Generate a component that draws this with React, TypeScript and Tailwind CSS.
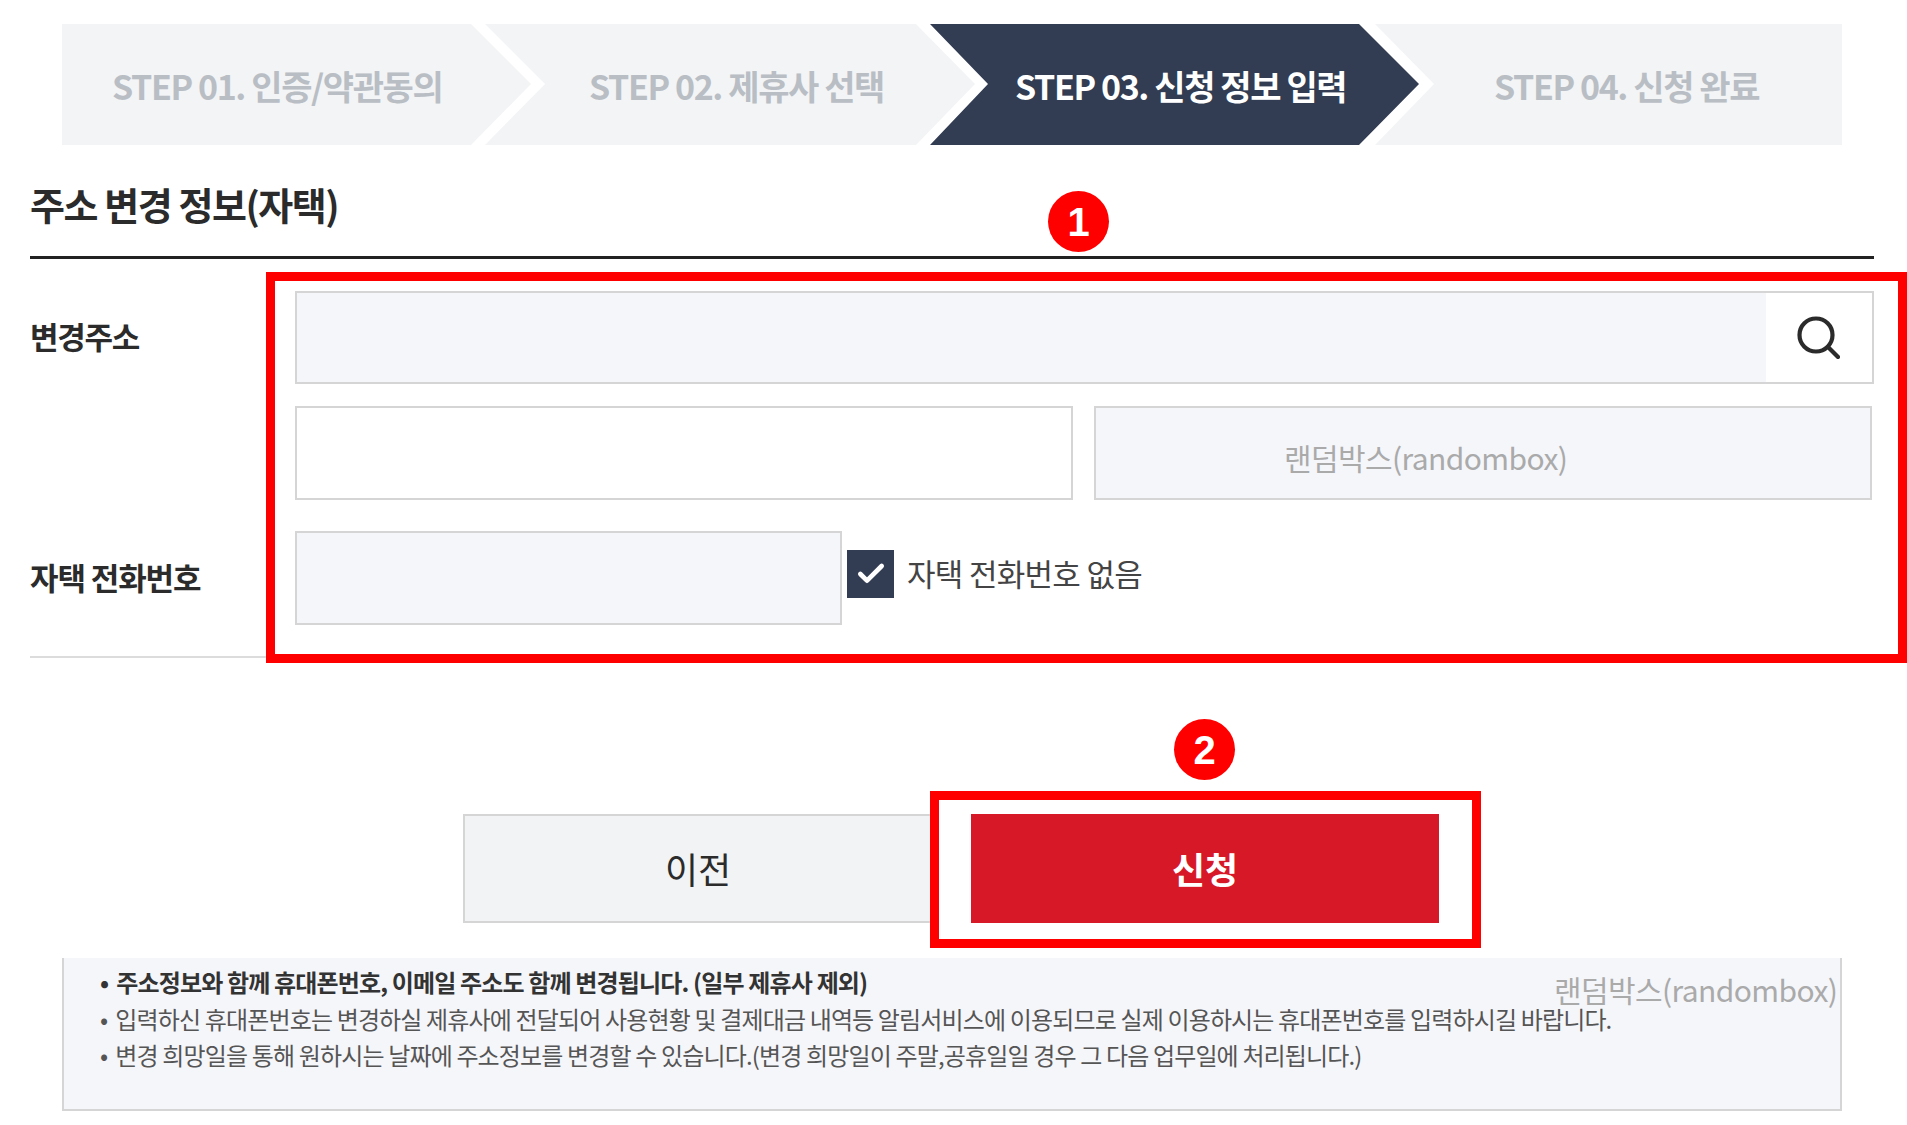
import React from "react";
import { Check } from "lucide-react";

const font = "font-['Noto_Sans_CJK_KR','Noto_Sans',sans-serif]";

const notices = [
  { text: "주소정보와 함께 휴대폰번호, 이메일 주소도 함께 변경됩니다. (일부 제휴사 제외)", strong: true },
  { text: "입력하신 휴대폰번호는 변경하실 제휴사에 전달되어 사용현황 및 결제대금 내역등 알림서비스에 이용되므로 실제 이용하시는 휴대폰번호를 입력하시길 바랍니다.", strong: false },
  { text: "변경 희망일을 통해 원하시는 날짜에 주소정보를 변경할 수 있습니다.(변경 희망일이 주말,공휴일일 경우 그 다음 업무일에 처리됩니다.)", strong: false },
];

const SearchIcon = () => (
  <svg width="44" height="44" viewBox="0 0 44 44" fill="none" stroke="#2b2b2b" strokeWidth="4.2" strokeLinecap="round">
    <circle cx="20" cy="20" r="16.5" />
    <line x1="32" y1="32" x2="42" y2="42" />
  </svg>
);

const Badge = ({ n, className }: { n: string; className: string }) => (
  <div className={`absolute flex h-[61px] w-[61px] items-center justify-center rounded-full bg-[#ff0000] font-['Liberation_Sans',sans-serif] text-[40px] font-bold leading-none text-white ${className}`}>
    {n}
  </div>
);

export default function App() {
  return (
    <div className={`${font} relative h-[1125px] w-full overflow-hidden bg-white px-[30px] pt-[24px]`}>
      {/* steps */}
      <div className="ml-[32px] flex h-[121px] text-[34px] font-bold tracking-[-1.4px]">
        <div className="flex h-full w-[469px] items-center bg-[#f3f4f6] pl-[50px] pt-[2px] text-[#b9bec5] [clip-path:polygon(0_0,409px_0,469px_60px,409px_121px,0_121px)]">
          STEP 01. 인증/약관동의
        </div>
        <div className="ml-[-46px] flex h-full w-[490px] items-center bg-[#f3f4f6] pl-[104px] pt-[2px] text-[#b9bec5] [clip-path:polygon(0_0,431px_0,490px_60px,431px_121px,0_121px,60px_60px)]">
          STEP 02. 제휴사 선택
        </div>
        <div className="ml-[-45px] flex h-full w-[489px] items-center bg-[#323c52] pl-[85px] pt-[2px] text-white [clip-path:polygon(0_0,429px_0,489px_60px,429px_121px,0_121px,58px_60px)]">
          STEP 03. 신청 정보 입력
        </div>
        <div className="ml-[-44px] flex h-full w-[467px] items-center bg-[#f3f4f6] pl-[119px] pt-[2px] text-[#b9bec5] [clip-path:polygon(0_0,467px_0,467px_121px,0_121px,59px_60px)]">
          STEP 04. 신청 완료
        </div>
      </div>

      {/* heading */}
      <div className="flex h-[114px] w-[1844px] items-start border-b-[3px] border-[#222] pt-[31px] text-[38px] font-bold leading-[56px] tracking-[-1.45px] text-[#2b2b2b]">
        주소 변경 정보(자택)
      </div>

      {/* form */}
      <div className="w-[1844px] border-b-2 border-[#dcdcdc] pb-[31px] pt-[32px]">
        <div className="flex">
          <div className="flex h-[93px] w-[265px] items-center pb-[2px] text-[31px] font-bold tracking-[-1.3px] text-[#2b2b2b]">변경주소</div>
          <div className="flex h-[93px] w-[1579px] border-2 border-[#d5d5d5]">
            <div className="flex-1 bg-[#f5f6fa]" />
            <div className="flex w-[106px] items-center justify-center pb-[2px] pr-[3px]">
              <SearchIcon />
            </div>
          </div>
        </div>
        <div className="mt-[22px] flex pl-[265px]">
          <div className="h-[94px] w-[778px] border-2 border-[#d5d5d5]" />
          <div className="ml-[21px] flex h-[94px] w-[778px] items-center border-2 border-[#d5d5d5] bg-[#f5f6fa] pl-[188px] pt-[8px] text-[30px] tracking-[-0.6px] text-[#aaaaaa]">
            랜덤박스(randombox)
          </div>
        </div>
        <div className="mt-[31px] flex items-center">
          <div className="w-[265px] pb-[2px] text-[31px] font-bold tracking-[-1.1px] text-[#2b2b2b]">자택 전화번호</div>
          <div className="h-[94px] w-[547px] border-2 border-[#d5d5d5] bg-[#f5f6fa]" />
          <div className="mb-[8px] ml-[5px] flex h-[48px] w-[47px] items-center justify-center bg-[#323c52]">
            <Check size={32} strokeWidth={3.5} color="white" />
          </div>
          <div className="mb-[10px] ml-[13px] text-[31px] tracking-[-0.7px] text-[#444]">자택 전화번호 없음</div>
        </div>
      </div>

      {/* buttons */}
      <div className="mt-[156px] flex pl-[433px]">
        <div className="flex h-[109px] w-[470px] items-center justify-center border-2 border-[#d5d5d5] bg-[#f2f3f5] pb-[2px] text-[36px] text-[#2b2b2b]">이전</div>
        <div className="ml-[38px] flex h-[109px] w-[468px] items-center justify-center bg-[#d71826] pb-[2px] text-[36px] font-bold text-white">신청</div>
      </div>

      {/* notice */}
      <div className="ml-[32px] mt-[35px] h-[153px] w-[1780px] border-x-2 border-b-2 border-[#d5d5d5] bg-[#f5f6fa] pl-[36px] pt-[6px] text-[24px] leading-[36.5px] tracking-[-0.85px]">
        {notices.map((item) => (
          <div key={item.text} className={`flex gap-[8px] ${item.strong ? "font-bold text-[#333]" : "text-[#555]"}`}>
            <span>•</span>
            <span>{item.text}</span>
          </div>
        ))}
      </div>

      {/* annotations over the page */}
      <div className="absolute left-[266px] top-[272px] h-[391px] w-[1641px] border-[9px] border-[#ff0000]" />
      <div className="absolute left-[930px] top-[791px] h-[157px] w-[551px] border-[9px] border-[#ff0000]" />
      <Badge n="1" className="left-[1048px] top-[191px]" />
      <Badge n="2" className="left-[1174px] top-[719px]" />
      <div className="absolute left-[1554px] top-[967px] text-[30px] leading-[44px] tracking-[-0.6px] text-[#aaaaaa]">랜덤박스(randombox)</div>
    </div>
  );
}
